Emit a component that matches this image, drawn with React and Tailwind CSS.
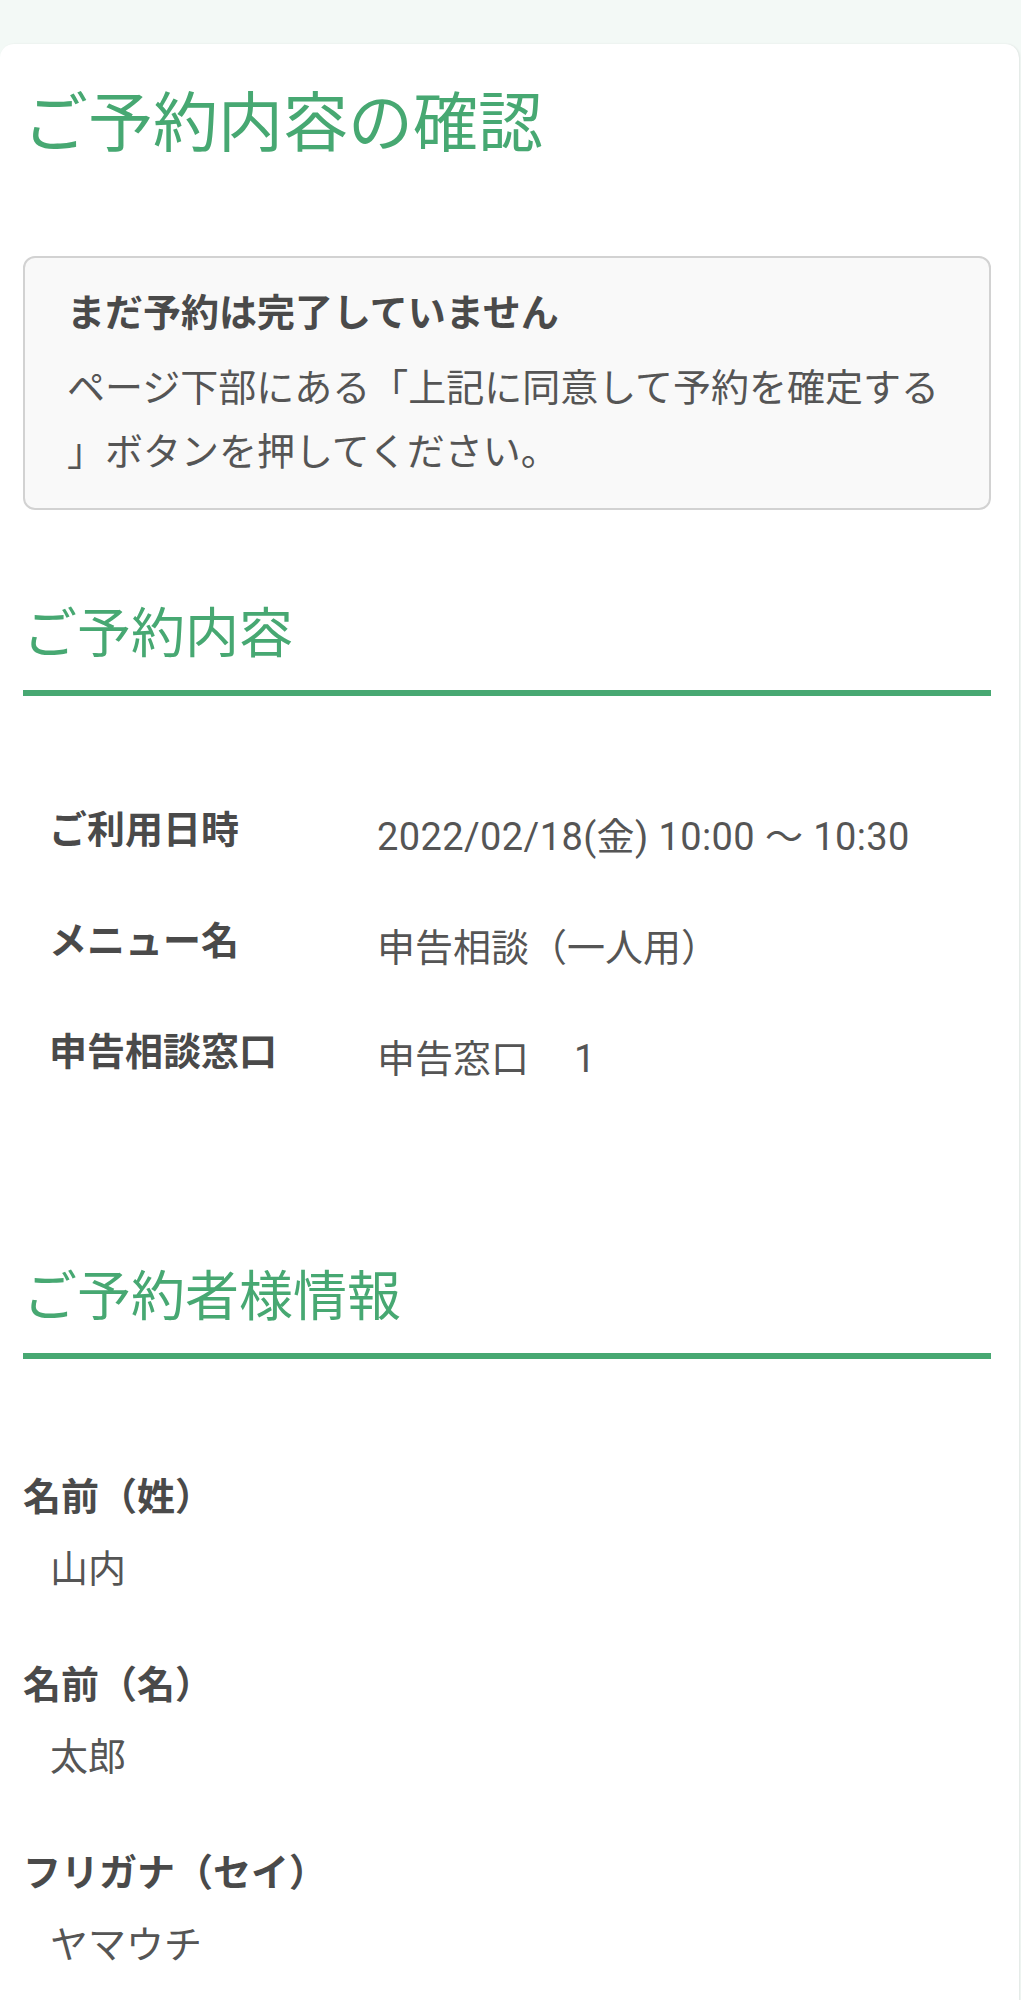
import React from "react";

const FONT = { fontFamily: 'Roboto, "Noto Sans CJK JP", sans-serif' };

function SectionHeading({ children }) {
  return (
    <h2 className="text-[54px] leading-[64px] font-normal text-[#47a872] pb-[23px] border-b-[6px] border-[#47a872]">
      {children}
    </h2>
  );
}

function DetailRow({ label, children }) {
  return (
    <div className="flex items-start pt-[27px] pb-[20px]">
      <div className="w-[328px] shrink-0 text-[38px] leading-[57px] font-bold text-[#4a4a4a]">
        {label}
      </div>
      <div className="mt-[7px] text-[38px] leading-[57px] text-[#555555] whitespace-pre">
        {children}
      </div>
    </div>
  );
}

function Field({ label, value }) {
  return (
    <div className="mb-[59px]">
      <div className="text-[38px] leading-[57px] font-bold text-[#4a4a4a]">{label}</div>
      <div className="mt-[15px] pl-[27px] text-[38px] leading-[57px] text-[#555555]">{value}</div>
    </div>
  );
}

export default function App() {
  const fields = [
    { label: "名前（姓）", value: "山内" },
    { label: "名前（名）", value: "太郎" },
    { label: "フリガナ（セイ）", value: "ヤマウチ" },
  ];

  return (
    <div style={FONT} className="min-h-[2000px] bg-[#f3f9f6] pt-[44px]">
      <main className="mr-[2px] min-h-[1956px] rounded-t-[14px] bg-white pl-[23px] pr-[28px] pb-[40px] shadow-[1px_0_2px_rgba(0,0,0,0.08)]">
        <h1 className="pt-[40px] text-[65px] leading-[80px] font-normal text-[#47a872]">
          ご予約内容の確認
        </h1>

        <section className="mt-[92px] rounded-[12px] border-2 border-[#d2d2d2] bg-[#f9f9f9] pl-[42px] pr-[20px] pt-[27px] pb-[24px]">
          <p className="text-[38px] leading-[56px] font-bold text-[#4a4a4a]">
            まだ予約は完了していません
          </p>
          <p className="mt-[15px] text-[38px] leading-[64px] text-[#555555]">
            ページ下部にある「上記に同意して予約を確定する
            <br />
            」ボタンを押してください。
          </p>
        </section>

        <section className="mt-[93px]">
          <SectionHeading>ご予約内容</SectionHeading>
          <div className="mt-[79px] pl-[26px]">
            <DetailRow label="ご利用日時">
              <span className="tracking-[0.4px]">2022/02/18(金) 10:00 〜 10:30</span>
            </DetailRow>
            <DetailRow label="メニュー名">申告相談（一人用）</DetailRow>
            <DetailRow label="申告相談窓口">
              申告窓口　<span className="pl-[7px]">1</span>
            </DetailRow>
          </div>
        </section>

        <section className="mt-[158px]">
          <SectionHeading>ご予約者様情報</SectionHeading>
          <div className="mt-[110px]">
            {fields.map((f) => (
              <Field key={f.label} label={f.label} value={f.value} />
            ))}
          </div>
        </section>
      </main>
    </div>
  );
}
